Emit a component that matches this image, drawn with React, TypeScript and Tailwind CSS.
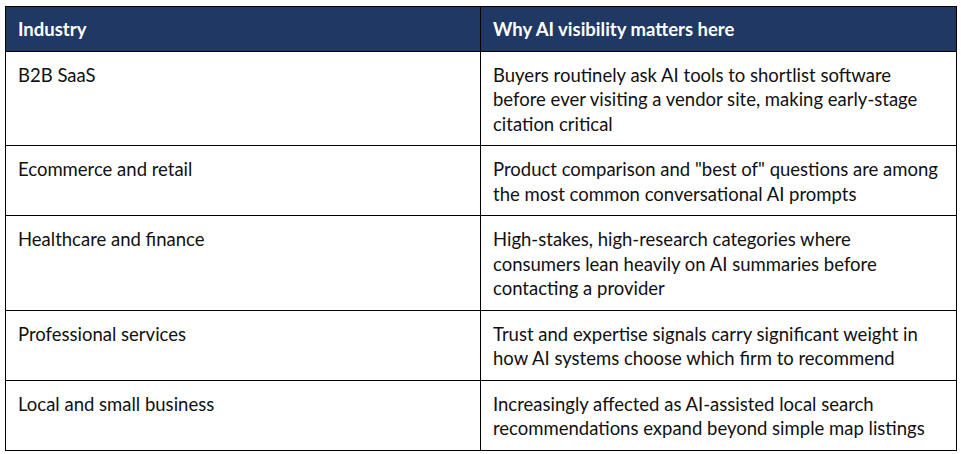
const rows = [
  {
    industry: 'B2B SaaS',
    why: ['Buyers routinely ask AI tools to shortlist software', 'before ever visiting a vendor site, making early-stage', 'citation critical'],
  },
  {
    industry: 'Ecommerce and retail',
    why: ['Product comparison and "best of" questions are among', 'the most common conversational AI prompts'],
  },
  {
    industry: 'Healthcare and finance',
    why: ['High-stakes, high-research categories where', 'consumers lean heavily on AI summaries before', 'contacting a provider'],
  },
  {
    industry: 'Professional services',
    why: ['Trust and expertise signals carry significant weight in', 'how AI systems choose which firm to recommend'],
  },
  {
    industry: 'Local and small business',
    why: ['Increasingly affected as AI-assisted local search', 'recommendations expand beyond simple map listings'],
  },
];

export default function App() {
  return (
    <div className="w-[961px] h-[454px] bg-white pt-[6px] pl-[5px]" style={{ fontFamily: 'Lato, "Open Sans", sans-serif' }}>
      <table className="w-[951px] border-collapse table-fixed text-[18.5px] leading-[24.5px] text-[#111]">
        <colgroup>
          <col className="w-[475px]" />
          <col className="w-[476px]" />
        </colgroup>
        <thead>
          <tr className="bg-[#203864] text-white font-bold">
            <th className="border border-black text-left align-top px-[12px] pt-[10px] pb-[9px]">Industry</th>
            <th className="border border-black text-left align-top px-[12px] pt-[10px] pb-[9px]">Why AI visibility matters here</th>
          </tr>
        </thead>
        <tbody>
          {rows.map((row) => (
            <tr key={row.industry}>
              <td className="border border-black align-top px-[12px] pt-[11px] pb-[9px]">{row.industry}</td>
              <td className="border border-black align-top px-[12px] pt-[11px] pb-[9px]">
                {row.why.map((line) => (
                  <div key={line} className="whitespace-nowrap">{line}</div>
                ))}
              </td>
            </tr>
          ))}
        </tbody>
      </table>
    </div>
  );
}
